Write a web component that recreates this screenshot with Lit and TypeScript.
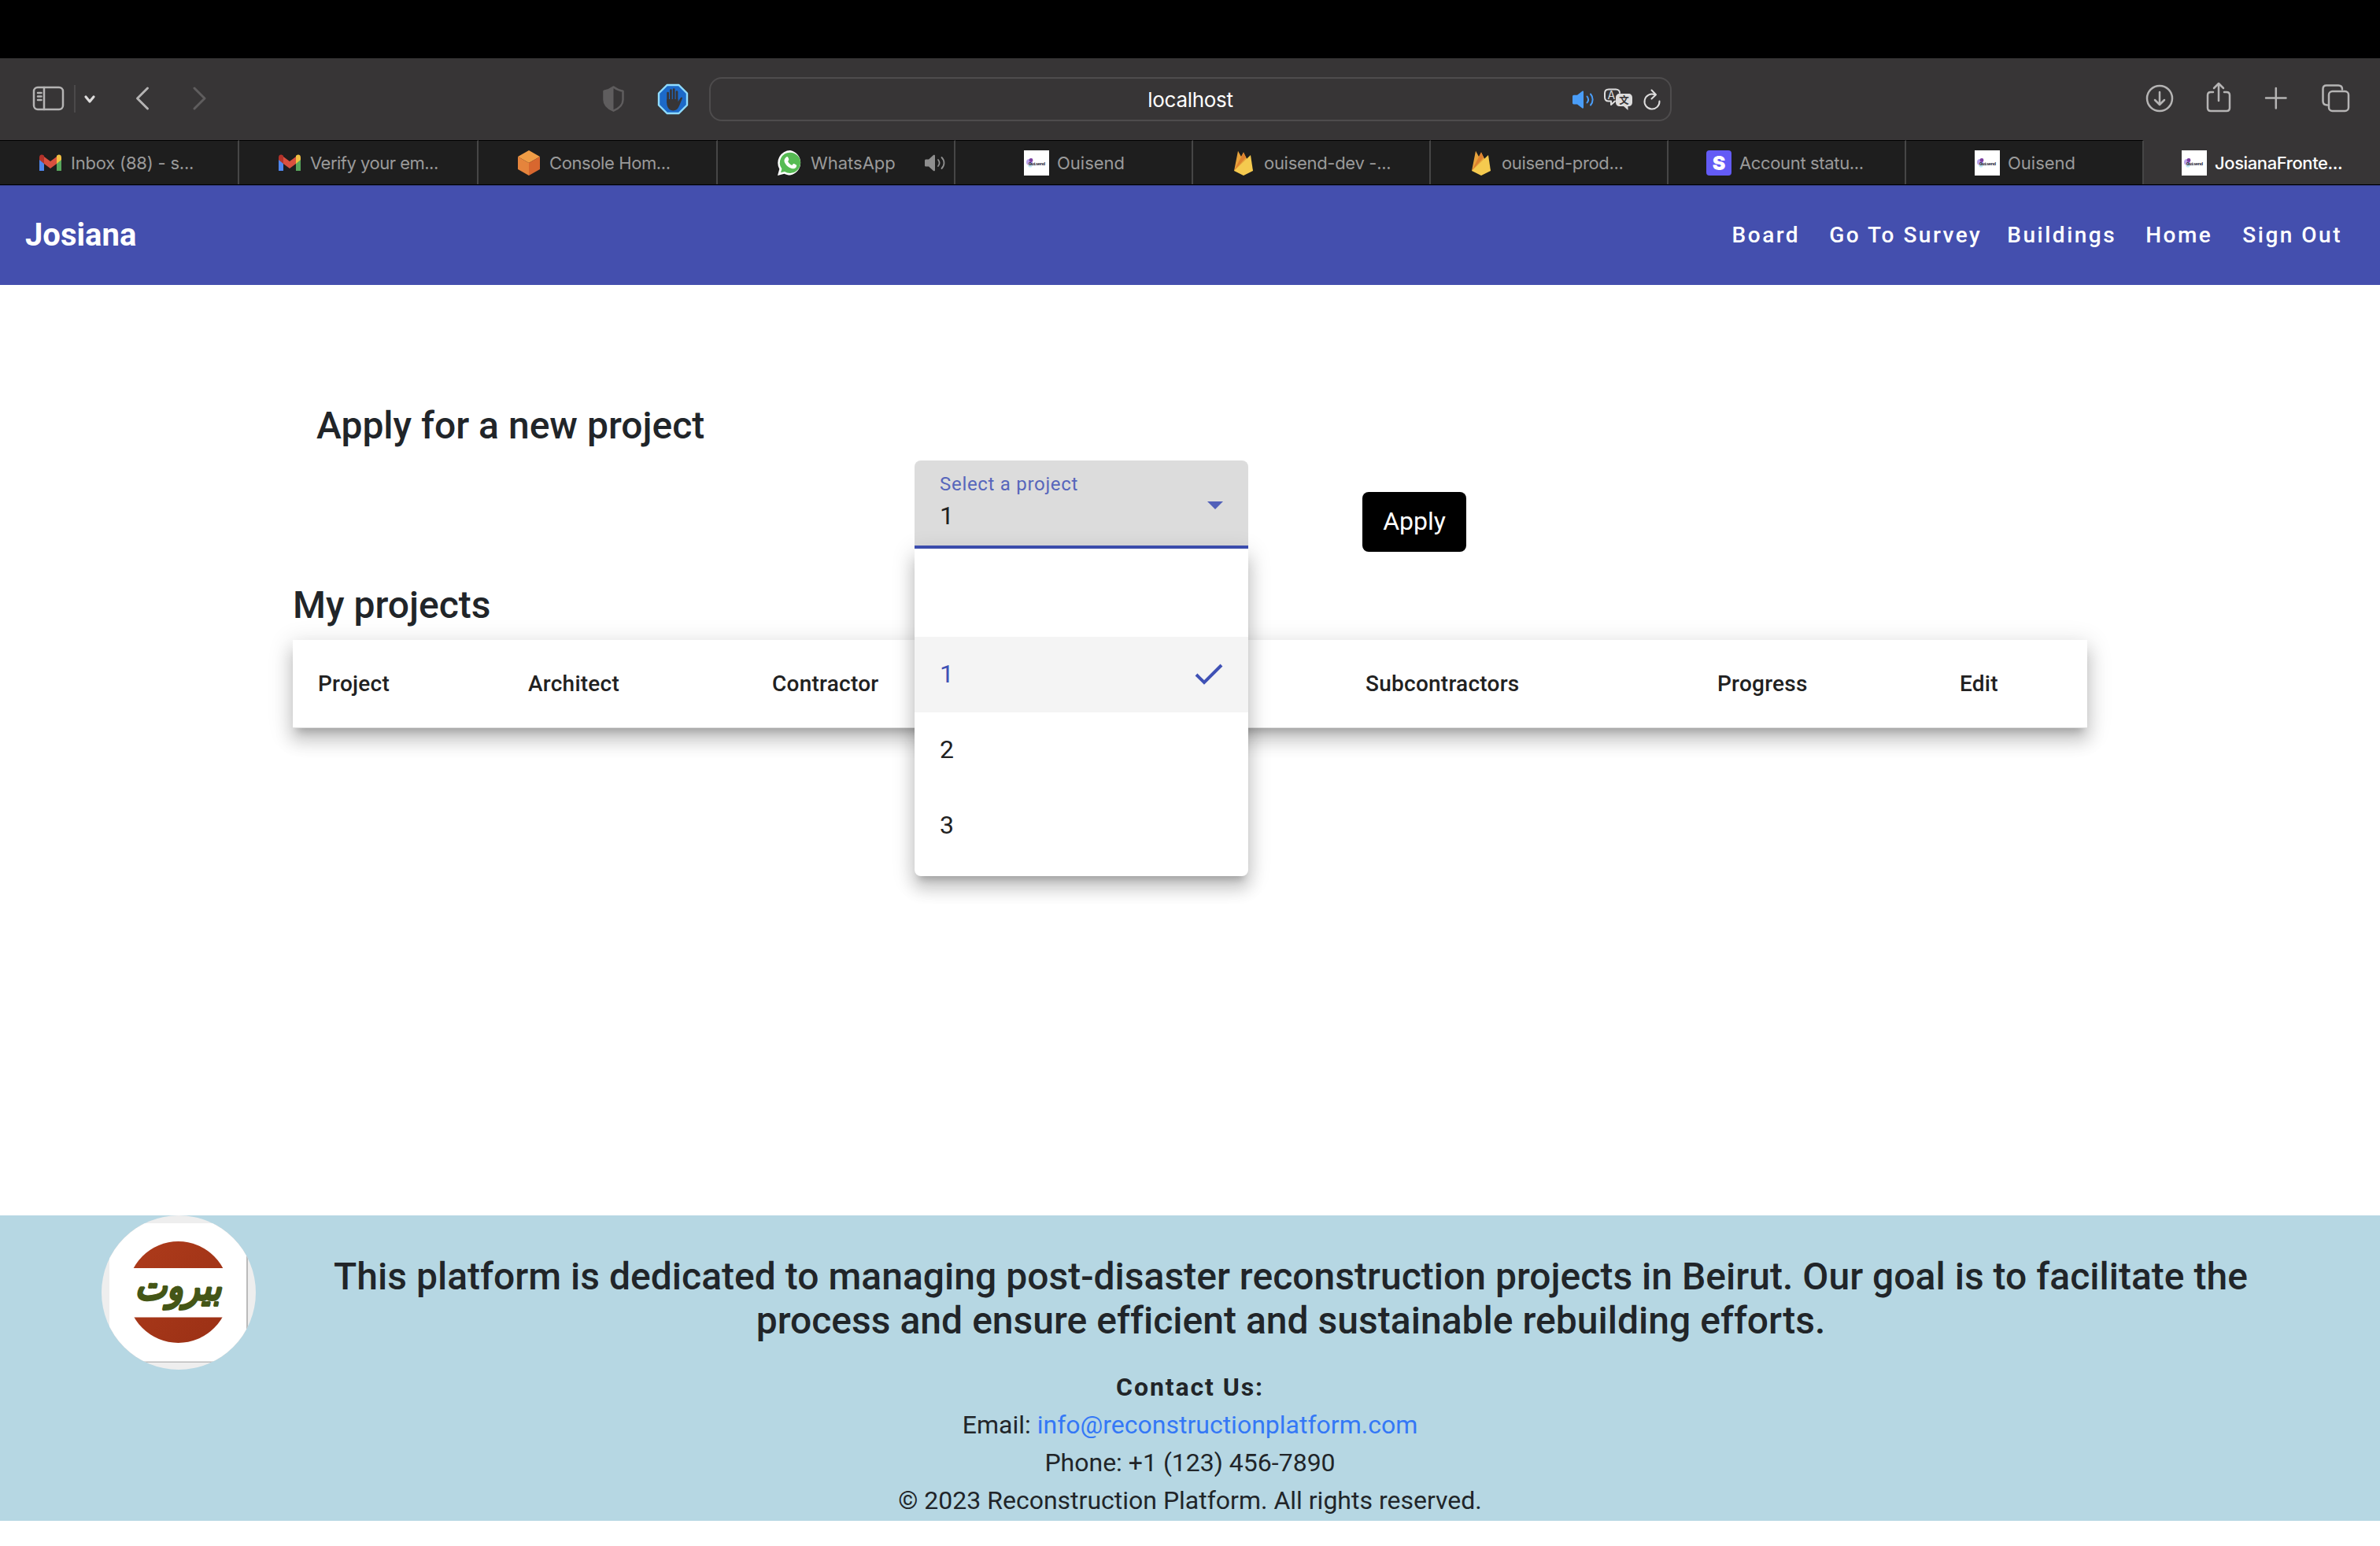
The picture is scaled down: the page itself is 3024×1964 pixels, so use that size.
import { LitElement, html, css, svg } from "lit";
import { customElement } from "lit/decorators.js";

type TabData = { icon: string; label: string; pad: number; ls: number; w: number; active?: boolean; sound?: boolean };

const TABS: TabData[] = [
  { icon: "gmail", label: "Inbox (88) - s...", pad: 48, ls: -0.2, w: 304 },
  { icon: "gmail", label: "Verify your em...", pad: 48, ls: -0.5, w: 304 },
  { icon: "aws", label: "Console Hom...", pad: 48, ls: -0.4, w: 304 },
  { icon: "whatsapp", label: "WhatsApp", pad: 76, ls: 0, w: 302, sound: true },
  { icon: "ouisend", label: "Ouisend", pad: 87, ls: 0, w: 302 },
  { icon: "firebase", label: "ouisend-dev -...", pad: 48, ls: -0.3, w: 302 },
  { icon: "firebase", label: "ouisend-prod...", pad: 48, ls: -0.35, w: 302 },
  { icon: "stripe", label: "Account statu...", pad: 48, ls: -0.35, w: 302 },
  { icon: "ouisend", label: "Ouisend", pad: 87, ls: 0, w: 302 },
  { icon: "ouisend", label: "JosianaFronte...", pad: 48, ls: -0.4, w: 300, active: true },
];

const FAVICONS: Record<string, unknown> = {
  gmail: svg`
    <path d="M2 9v17h6V15z" fill="#4f86ec"/><path d="M30 9v17h-6V15z" fill="#58a65c"/>
    <path d="M8 8v9l8 6 8-6V8l-8 6z" fill="#d9503f"/>
    <path d="M2 9c0-4 4-4.500 6-2v10l-6-5z" fill="#b3322a"/><path d="M30 9c0-4-4-4.500-6-2v10l6-5z" fill="#f2bf42"/>`,
  aws: svg`
    <path d="M16 0l14 8-14 8L2 8z" fill="#f09d46"/><path d="M2 8l14 8v16L2 24z" fill="#e5843c"/>
    <path d="M30 8l-14 8v16l14-8z" fill="#d8672f"/>`,
  whatsapp: svg`
    <path d="M16 0a16 16 0 0 1 0 31.500c-3 0-5-.6-7.500-1.800L0 32l2.300-8.200A16 16 0 0 1 16 0z" fill="#fff"/>
    <path d="M16 2.700a13 13 0 0 1 0 26.200c-2.700 0-5-.8-7-2l-5 1.400 1.400-4.900A13 13 0 0 1 16 2.700z" fill="#57bb54"/>
    <path d="M11 8.500c1.500-1.300 2.200-.5 3 2 .6 1.700.2 2-.9 3.500 1.300 2.400 2.900 4 5.300 5 1.500-2 1.800-2.300 3.500-1.400 2.300 1.200 2.700 1.300 1.900 3.300-1 2.400-3.800 2.800-6 2.100-5-1.600-7.800-5-9.200-8.800-.7-2 .9-4.400 2.400-5.700z" fill="#fff"/>`,
  ouisend: svg`
    <rect width="32" height="32" fill="#fff"/>
    <circle cx="7" cy="15" r="4" fill="#b9a3ea"/><circle cx="9" cy="12.500" r="2.400" fill="#7b3fa0"/><circle cx="8" cy="19" r="2.600" fill="#bfe6f5"/>
    <text x="6" y="19" font-family="Liberation Mono" font-weight="700" font-size="6" textLength="21" fill="#1a1a2e">Ouisend</text>`,
  firebase: svg`
    <path d="M4 26L9 .8 13 8l3-5.500L28 26z" fill="#e8a33b"/><path d="M4 26L16 2.500 19 9z" fill="#dd812f"/>
    <path d="M4 26L25 6l3 20-12 6z" fill="#f5ca4f"/>`,
  stripe: svg`
    <rect width="32" height="32" rx="4" fill="#635bf6"/>
    <text x="16" y="25" text-anchor="middle" font-family="Inter" font-weight="900" font-size="25" fill="#fff">S</text>`,
};

@customElement("browser-bar")
class BrowserBar extends LitElement {
  static styles = css`
    :host { display: block; font-family: Inter, sans-serif; }
    .notch { height: 74px; background: #000; }
    .toolbar { height: 104px; background: #373536; display: grid; grid-template-columns: 901px 1223px 1fr; align-items: center; }
    .side { display: flex; align-items: center; height: 104px; }
    svg { display: block; flex: none; }
    .field { box-sizing: border-box; height: 56px; border: 2px solid #4e4c4d; border-radius: 16px; display: grid; grid-template-columns: 1fr auto 1fr; align-items: center; color: #fff; font-size: 26px; }
    .host { letter-spacing: -0.3px; }
    .tools { display: flex; justify-content: flex-end; align-items: center; padding-right: 10px; }
    .tabs { display: flex; height: 57px; box-sizing: border-box; border-bottom: 1px solid #000; background: #1e1e1e; }
    .tab { box-sizing: border-box; display: flex; align-items: center; gap: 10px; border-right: 2px solid #464646; border-top: 1px solid #000; color: #9a9a9a; font-size: 22px; white-space: nowrap; }
    .tab.active { background: #373536; border-color: #373536; color: #fff; font-weight: 500; }
    .sound { margin-left: 26px; }
  `;
  render() {
    return html`
      <div class="notch"></div>
      <div class="toolbar">
        <div class="side">
          <svg width="901" height="104" viewBox="0 74 901 104" fill="none" stroke="#b5b4b4" stroke-width="2.500" stroke-linecap="round" stroke-linejoin="round">
            <rect x="43" y="111" width="37" height="28" rx="5"/><path d="M56 111v28M48 118h4.500M48 122.500h4.500M48 127h4.500"/>
            <path d="M95 108v35" stroke="#4b494a" stroke-width="2" stroke-linecap="butt"/>
            <path d="M109 123l5 6 5-6" stroke="#dddcdc" stroke-width="3.200"/>
            <path d="M187.500 112l-13 13 13 13" stroke-width="3"/>
            <path d="M247 112l13 13-13 13" stroke="#5f5d5e" stroke-width="3"/>
            <path d="M779.500 110.500c4 3 7 4.500 12 5.200v11c0 6-5 11-12 14-7-3-12-8-12-14v-11c5-.7 8-2.200 12-5.200z" stroke="#5f5d5e" stroke-width="2.500"/>
            <path d="M779.500 110.500v30.200c-7-3-12-8-12-14v-11c5-.7 8-2.200 12-5.200z" fill="#5f5d5e" stroke="none"/>
            <path d="M847.500 108h15l10.500 10.500v15L862.500 144h-15L837 133.500v-15z" fill="#1c69c8" stroke="#8fdcff" stroke-width="2.400"/>
            <path d="M848.600 118v12M852.400 114.500v14M856.200 113.500v14M860 116.500v14" stroke="#373536" stroke-width="2.700"/>
            <path d="M847.250 126h14.100v3.500l3.400-5.200c1.200-1.500 2.700-.7 2.100 1L863 134.500c-1.500 3.800-4 6-7.500 6-5 0-8.250-4-8.250-10z" fill="#373536" stroke="none"/>
          </svg>
        </div>
        <div class="field">
          <span></span><span class="host">localhost</span>
          <span class="tools">
            <svg width="116" height="32" viewBox="1996 108 116 32" fill="none" stroke-linecap="round" stroke-linejoin="round">
              <path d="M1998 120.500c0-1 .7-1.700 1.700-1.700h4.300l6.500-5c.8-.5 1.500-.2 1.500.8v20c0 1-.7 1.300-1.500.8l-6.500-5h-4.300c-1 0-1.700-.7-1.700-1.700z" fill="#4a9df8"/>
              <path d="M2016.500 120.500c2 2.500 2 5.500 0 8M2021 117.500c3.500 4 3.500 10 0 14" stroke="#4a9df8" stroke-width="2"/>
              <path d="M2052 126.500l-5 4.500v-4.500h-3c-3 0-5-2-5-5v-5c0-3 2-5 5-5h9c3 0 5 2 5 4.500" stroke="#dedddd" stroke-width="2"/>
              <path d="M2058 117h11c3 0 5 2 5 5v6c0 3-2 5-5 5h-.5v5l-5.500-5h-5c-3 0-5-2-5-5v-6c0-3 2-5 5-5z" fill="#dedddd"/>
              <text x="2042.500" y="124" font-family="Inter" font-size="14" fill="#dedddd">A</text>
              <text x="2057.300" y="130.300" font-family="Noto Sans CJK SC" font-weight="700" font-size="12.500" fill="#373536">文</text>
              <path d="M2102.500 118.200a9.500 9.500 0 1 0 6 8.300M2098.500 112.500l5.500 5.700-5.500 5.300" stroke="#dedddd" stroke-width="2"/>
            </svg>
          </span>
        </div>
        <div class="side">
          <svg width="900" height="104" viewBox="2124 74 900 104" fill="none" stroke="#b5b4b4" stroke-width="2.500" stroke-linecap="round" stroke-linejoin="round">
            <circle cx="2744" cy="125" r="16"/><path d="M2744 117v15M2738 127l6 6 6-6"/>
            <path d="M2812 117h-3c-2.500 0-4 1.500-4 4v16c0 2.500 1.500 4 4 4h20c2.500 0 4-1.500 4-4v-16c0-2.500-1.500-4-4-4h-3M2819 128v-21M2813 112l6-6 6 6"/>
            <path d="M2879 124.500h25.500M2891.800 112v25.500"/>
            <path d="M2957 133.500c-3.500 0-5.500-1.500-5.500-5V113c0-3 1.500-4.500 4.500-4.500h15c3 0 5 1.500 5 5"/><rect x="2959" y="116" width="25" height="25" rx="4.500"/>
          </svg>
        </div>
      </div>
      <div class="tabs">
        ${TABS.map((t) => html`
          <div class="tab ${t.active ? "active" : ""}" style="width:${t.w}px;padding-left:${t.pad}px">
            <svg width="32" height="32" viewBox="0 0 32 32">${FAVICONS[t.icon]}</svg>
            <span style="letter-spacing:${t.ls}px">${t.label}</span>
            ${t.sound ? html`<svg class="sound" width="28" height="24" viewBox="0 0 28 24" fill="none">
              <path d="M1 9c0-1 .6-1.600 1.600-1.600H6L12 2c1-.7 2-.4 2 1v18c0 1.400-1 1.700-2 1l-6-5.400H2.600C1.600 16.600 1 16 1 15z" fill="#8e8e8e"/>
              <path d="M18 8c2 2.500 2 5.500 0 8M22.500 5c4 4 4 10 0 14" stroke="#8e8e8e" stroke-width="1.800" stroke-linecap="round"/></svg>` : ""}
          </div>`)}
      </div>`;
  }
}

@customElement("project-select")
class ProjectSelect extends LitElement {
  static styles = css`
    :host { display: block; position: relative; width: 424px; color: #212121; font-size: 32px; }
    .box { box-sizing: border-box; height: 112px; background: #dcdcdc; border-radius: 8px 8px 0 0; border-bottom: 4px solid #3f51b5; padding: 14px 32px 0; display: grid; grid-template-columns: 1fr auto; }
    .label { font-size: 24px; line-height: 32px; letter-spacing: 0.7px; color: #5766bb; }
    .value { line-height: 48px; }
    .text { display: flex; flex-direction: column; }
    .arrow { width: 20px; height: 10px; margin-top: 38px; }
    .panel { position: absolute; z-index: 2; top: 112px; left: 0; width: 424px; box-sizing: border-box; padding: 16px 0; background: #fff; border-radius: 0 0 8px 8px;
      box-shadow: 0 10px 10px -6px rgba(0,0,0,.2), 0 16px 20px 2px rgba(0,0,0,.14), 0 6px 28px 4px rgba(0,0,0,.12); }
    .option { height: 96px; padding: 0 32px; display: flex; align-items: center; justify-content: space-between; }
    .option span { padding-bottom: 2px; }
    .option.selected { background: #f4f4f4; color: #3f51b5; }
  `;
  render() {
    return html`
      <div class="box">
        <div class="text"><span class="label">Select a project</span><span class="value">1</span></div>
        <svg class="arrow" viewBox="0 0 20 10"><path d="M0 0h20L10 10z" fill="#5160b9"/></svg>
      </div>
      <div class="panel">
        ${["", "1", "2", "3"].map((o) => html`
          <div class="option ${o === "1" ? "selected" : ""}"><span>${o}</span>
            ${o === "1" ? html`<svg width="36" height="28" viewBox="0 0 36 28"><path d="M2 14l10 10L34 2" fill="none" stroke="#3f51b5" stroke-width="4"/></svg>` : ""}
          </div>`)}
      </div>`;
  }
}

@customElement("app-root")
class AppRoot extends LitElement {
  static styles = css`
    :host { display: flex; flex-direction: column; height: 1964px; width: 3024px; background: #fff; overflow: hidden; font-family: Roboto, sans-serif; color: #212529; }
    .header { box-sizing: border-box; height: 127px; background: #444fae; border-top: 1px solid #2c3470; color: #fff; display: flex; align-items: center; justify-content: space-between; padding: 0 48px 2px 32px; font-weight: 500; }
    .brand { font-size: 40px; font-weight: 700; }
    .nav { display: flex; font-size: 28px; letter-spacing: 2.500px; }
    .main { flex: 1; padding: 150px 372px 0; }
    h3 { margin: 0; font-size: 48px; font-weight: 500; line-height: 57.600px; }
    .apply-title { padding-left: 30px; }
    .apply-row { display: flex; align-items: flex-start; padding: 15px 0 0 790px; height: 170px; box-sizing: border-box; }
    .apply { width: 132px; height: 76px; border: 0; padding: 0 0 2px; border-radius: 8px; background: #000; color: #fff; font: 400 32px Roboto, sans-serif; margin: 40px 0 0 145px; }
    .table { box-sizing: border-box; margin-top: 16px; height: 112px; border-bottom: 1px solid #e0e0e0; display: grid; grid-template-columns: 267px 310px 754px 447px 308px 1fr; padding-left: 32px; align-items: center; font-size: 28px; font-weight: 500; letter-spacing: 0.25px; color: #212121;
      box-shadow: 0 10px 10px -6px rgba(0,0,0,.2), 0 16px 20px 2px rgba(0,0,0,.14), 0 6px 28px 4px rgba(0,0,0,.12); }
    .footer { background: #b6d7e3; height: 388px; margin-bottom: 32px; }
    .top { display: flex; height: 194px; }
    .logo { width: 196px; height: 196px; margin-left: 129px; flex: none; }
    .mission { padding: 50px 0 0; margin-left: -69px; flex: 1; text-align: center; line-height: 56px; letter-spacing: 0.020px; }
    .contact { text-align: center; font-size: 32px; line-height: 48px; }
    .contact b { letter-spacing: 1.900px; }
    a { color: #3478f6; text-decoration: none; }
  `;
  render() {
    return html`
      <browser-bar></browser-bar>
      <header class="header">
        <span class="brand">Josiana</span>
        <nav class="nav">
          <span style="margin-right:37px">Board</span><span style="margin-right:32px">Go To Survey</span><span style="margin-right:37px">Buildings</span><span style="margin-right:38px">Home</span><span>Sign Out</span>
        </nav>
      </header>
      <main class="main">
        <h3 class="apply-title">Apply for a new project</h3>
        <div class="apply-row"><project-select></project-select><button class="apply">Apply</button></div>
        <h3>My projects</h3>
        <div class="table"><span>Project</span><span>Architect</span><span>Contractor</span><span>Subcontractors</span><span>Progress</span><span>Edit</span></div>
      </main>
      <footer class="footer">
        <div class="top">
          <svg class="logo" viewBox="0 0 196 196">
            <defs><clipPath id="round"><circle cx="98" cy="98" r="98"/></clipPath><clipPath id="bands"><path d="M30 30h140v37H30zM30 129.500h140v40H30z"/></clipPath>
              <linearGradient id="rust" x1="0" y1="0" x2="1" y2="1"><stop offset="0" stop-color="#ae3b1b"/><stop offset="1" stop-color="#9a3015"/></linearGradient></defs>
            <g clip-path="url(#round)"><rect width="196" height="196" fill="#eee"/><rect x="11" y="11" width="175" height="176" fill="#bbb"/><rect x="10" y="10" width="174" height="175.500" fill="#fff"/></g>
            <circle cx="97.500" cy="97.500" r="64.500" fill="url(#rust)" clip-path="url(#bands)"/>
            <text x="97.500" y="107" text-anchor="middle" font-family="DejaVu Sans" font-weight="700" font-style="oblique" font-size="50" fill="#445617" stroke="#445617" stroke-width="2" stroke-linejoin="round" textLength="110" lengthAdjust="spacingAndGlyphs">بيروت</text>
          </svg>
          <h3 class="mission">This platform is dedicated to managing post-disaster reconstruction projects in Beirut. Our goal is to facilitate the<br>process and ensure efficient and sustainable rebuilding efforts.</h3>
        </div>
        <div class="contact">
          <div><b>Contact Us:</b></div>
          <div>Email: <a>info@reconstructionplatform.com</a></div>
          <div>Phone: +1 (123) 456-7890</div>
          <div>© 2023 Reconstruction Platform. All rights reserved.</div>
        </div>
      </footer>`;
  }
}
